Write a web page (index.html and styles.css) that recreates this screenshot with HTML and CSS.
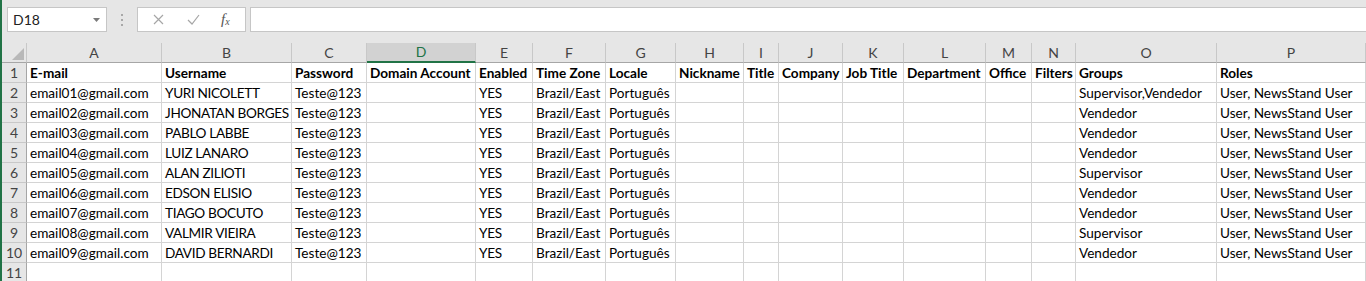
FILE: index.html
```html
<!DOCTYPE html>
<html lang="pt-BR">
<head>
    <meta charset="UTF-8">
    <meta name="viewport" content="width=device-width, initial-scale=1.0">
    <title>Usuarios - Excel</title>
    <link rel="stylesheet" href="styles.css">
</head>
<body>
    <!-- Name box and formula bar -->
    <div class="formula-bar">
        <div class="name-box">
            <span>D18</span>
            <svg class="name-arrow" width="7" height="4" viewBox="0 0 7 4"><path d="M0 0h7L3.5 4z" fill="#7a7a7a"/></svg>
        </div>
        <div class="bar-dots"><i></i><i></i><i></i></div>
        <div class="bar-buttons">
            <svg width="11" height="11" viewBox="0 0 11 11"><path d="M1 1l9 9M10 1l-9 9" stroke="#a6a6a6" stroke-width="1.2" fill="none"/></svg>
            <svg width="13" height="11" viewBox="0 0 13 11"><path d="M1 6l4 4 7-9" stroke="#a6a6a6" stroke-width="1.2" fill="none"/></svg>
            <span class="fx">f<sub>x</sub></span>
        </div>
        <div class="formula-input"></div>
    </div>

    <!-- Worksheet grid -->
    <table class="sheet">
        <colgroup>
            <col class="w-row"><col class="w-a"><col class="w-b"><col class="w-c"><col class="w-d">
            <col class="w-e"><col class="w-f"><col class="w-g"><col class="w-h"><col class="w-i">
            <col class="w-j"><col class="w-k"><col class="w-l"><col class="w-m"><col class="w-n">
            <col class="w-o"><col class="w-p"><col class="w-q">
        </colgroup>
        <thead>
            <tr>
                <th class="corner"><svg width="12" height="12" viewBox="0 0 12 12"><path d="M12 0v12H0z" fill="#b8b8b8"/></svg></th>
                <th>A</th><th>B</th><th>C</th><th class="selected">D</th><th>E</th><th>F</th><th>G</th><th>H</th>
                <th>I</th><th>J</th><th>K</th><th>L</th><th>M</th><th>N</th><th>O</th><th>P</th><th></th>
            </tr>
        </thead>
        <tbody>
            <tr class="titles">
                <th>1</th><td>E-mail</td><td>Username</td><td>Password</td><td>Domain Account</td><td>Enabled</td><td>Time Zone</td><td>Locale</td><td>Nickname</td>
                <td>Title</td><td>Company</td><td>Job Title</td><td>Department</td><td>Office</td><td>Filters</td><td>Groups</td><td>Roles</td><td></td>
            </tr>
            <tr>
                <th>2</th><td>email01@gmail.com</td><td class="upper">YURI NICOLETT</td><td>Teste@123</td><td></td><td class="upper">YES</td><td>Brazil/East</td><td>Português</td><td></td>
                <td></td><td></td><td></td><td></td><td></td><td></td><td>Supervisor,Vendedor</td><td>User, NewsStand User</td><td></td>
            </tr>
            <tr>
                <th>3</th><td>email02@gmail.com</td><td class="upper">JHONATAN BORGES</td><td>Teste@123</td><td></td><td class="upper">YES</td><td>Brazil/East</td><td>Português</td><td></td>
                <td></td><td></td><td></td><td></td><td></td><td></td><td>Vendedor</td><td>User, NewsStand User</td><td></td>
            </tr>
            <tr>
                <th>4</th><td>email03@gmail.com</td><td class="upper">PABLO LABBE</td><td>Teste@123</td><td></td><td class="upper">YES</td><td>Brazil/East</td><td>Português</td><td></td>
                <td></td><td></td><td></td><td></td><td></td><td></td><td>Vendedor</td><td>User, NewsStand User</td><td></td>
            </tr>
            <tr>
                <th>5</th><td>email04@gmail.com</td><td class="upper">LUIZ LANARO</td><td>Teste@123</td><td></td><td class="upper">YES</td><td>Brazil/East</td><td>Português</td><td></td>
                <td></td><td></td><td></td><td></td><td></td><td></td><td>Vendedor</td><td>User, NewsStand User</td><td></td>
            </tr>
            <tr>
                <th>6</th><td>email05@gmail.com</td><td class="upper">ALAN ZILIOTI</td><td>Teste@123</td><td></td><td class="upper">YES</td><td>Brazil/East</td><td>Português</td><td></td>
                <td></td><td></td><td></td><td></td><td></td><td></td><td>Supervisor</td><td>User, NewsStand User</td><td></td>
            </tr>
            <tr>
                <th>7</th><td>email06@gmail.com</td><td class="upper">EDSON ELISIO</td><td>Teste@123</td><td></td><td class="upper">YES</td><td>Brazil/East</td><td>Português</td><td></td>
                <td></td><td></td><td></td><td></td><td></td><td></td><td>Vendedor</td><td>User, NewsStand User</td><td></td>
            </tr>
            <tr>
                <th>8</th><td>email07@gmail.com</td><td class="upper">TIAGO BOCUTO</td><td>Teste@123</td><td></td><td class="upper">YES</td><td>Brazil/East</td><td>Português</td><td></td>
                <td></td><td></td><td></td><td></td><td></td><td></td><td>Vendedor</td><td>User, NewsStand User</td><td></td>
            </tr>
            <tr>
                <th>9</th><td>email08@gmail.com</td><td class="upper">VALMIR VIEIRA</td><td>Teste@123</td><td></td><td class="upper">YES</td><td>Brazil/East</td><td>Português</td><td></td>
                <td></td><td></td><td></td><td></td><td></td><td></td><td>Supervisor</td><td>User, NewsStand User</td><td></td>
            </tr>
            <tr>
                <th>10</th><td>email09@gmail.com</td><td class="upper">DAVID BERNARDI</td><td>Teste@123</td><td></td><td class="upper">YES</td><td>Brazil/East</td><td>Português</td><td></td>
                <td></td><td></td><td></td><td></td><td></td><td></td><td>Vendedor</td><td>User, NewsStand User</td><td></td>
            </tr>
            <tr>
                <th>11</th><td></td><td></td><td></td><td></td><td></td><td></td><td></td><td></td>
                <td></td><td></td><td></td><td></td><td></td><td></td><td></td><td></td><td></td>
            </tr>
        </tbody>
    </table>
</body>
</html>
```

FILE: styles.css
```css
body {
    margin: 0;
    height: 281px;
    overflow: hidden;
    background-color: #e6e6e6;
    border-left: 2px solid #217346;
    font-family: Lato, 'Liberation Sans', sans-serif;
    font-size: 14px;
    color: #000;
}

/* Formula bar */
.formula-bar {
    display: flex;
    align-items: center;
    height: 25px;
    padding: 7px 0 11px 5px;
}
.name-box {
    display: flex;
    align-items: center;
    justify-content: space-between;
    box-sizing: border-box;
    width: 100px;
    height: 25px;
    padding: 0 6px 0 5px;
    background-color: #fff;
    border: 1px solid #c6c6c6;
    font-size: 14px;
    color: #222;
}
.bar-dots {
    display: flex;
    flex-direction: column;
    gap: 3px;
    margin: 0 14px 0 14px;
}
.bar-dots i {
    display: block;
    width: 2px;
    height: 2px;
    background-color: #a8a8a8;
}
.bar-buttons {
    display: flex;
    align-items: center;
    box-sizing: border-box;
    width: 109px;
    height: 25px;
    padding-left: 15px;
    gap: 23px;
    background-color: #fff;
    border: 1px solid #c6c6c6;
}
.fx {
    font-family: 'Liberation Serif', serif;
    font-style: italic;
    font-size: 15px;
    color: #555;
    margin-left: -2px;
}
.fx sub {
    font-size: 10px;
    vertical-align: -1px;
}
.formula-input {
    flex: 1;
    height: 25px;
    box-sizing: border-box;
    margin-left: 4px;
    background-color: #fff;
    border: 1px solid #c6c6c6;
    border-right: none;
}

/* Sheet grid */
.sheet {
    border-collapse: separate;
    border-spacing: 0;
    table-layout: fixed;
    width: 1424px;
    background-color: #fff;
}
.w-row { width: 25px; }
.w-a { width: 135px; }
.w-b { width: 130px; }
.w-c { width: 75px; }
.w-d { width: 109px; }
.w-e { width: 57px; }
.w-f { width: 73px; }
.w-g { width: 70px; }
.w-h { width: 68px; }
.w-i { width: 35px; }
.w-j { width: 64px; }
.w-k { width: 61px; }
.w-l { width: 82px; }
.w-m { width: 46px; }
.w-n { width: 44px; }
.w-o { width: 141px; }
.w-p { width: 149px; }
.w-q { width: 60px; }

.sheet th,
.sheet td {
    box-sizing: border-box;
    height: 20px;
    padding: 0;
    white-space: nowrap;
    overflow: hidden;
    line-height: 18px;
}
.sheet thead th {
    background-color: #e6e6e6;
    border-right: 1px solid #c8c8c8;
    border-bottom: 1px solid #a6a6a6;
    font-weight: normal;
    color: #444;
    text-align: center;
    vertical-align: bottom;
}
.sheet thead th.corner {
    text-align: right;
    vertical-align: bottom;
    padding: 0 2px 2px 0;
    line-height: 0;
}
.sheet thead th.selected {
    background-color: #d2d2d2;
    border-bottom: 2px solid #217346;
    color: #217346;
}
.sheet tbody th {
    background-color: #e6e6e6;
    border-right: 1px solid #a6a6a6;
    border-bottom: 1px solid #c8c8c8;
    font-weight: normal;
    color: #444;
    text-align: center;
    vertical-align: bottom;
}
.sheet td {
    border-right: 1px solid #d4d4d4;
    border-bottom: 1px solid #d4d4d4;
    padding-left: 3px;
    font-size: 13.6px;
    vertical-align: bottom;
}
/* Lato capitals run wider than the sheet font */
.sheet td.upper {
    letter-spacing: -0.35px;
}
.titles td {
    font-weight: bold;
}
```
